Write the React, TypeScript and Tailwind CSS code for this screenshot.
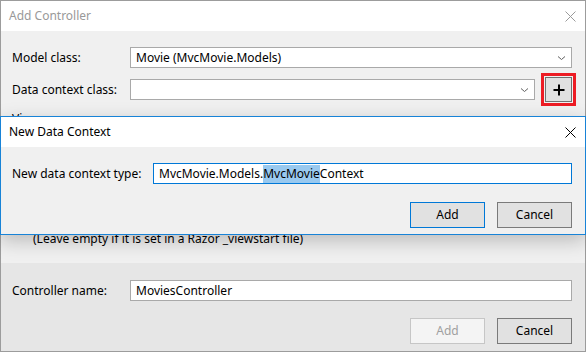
import React from 'react';

const Chevron: React.FC = () => (
  <svg width="9" height="6" viewBox="0 0 9 6" className="shrink-0">
    <path d="M1 1.5 L4.5 4.5 L8 1.5" fill="none" stroke="#606060" strokeWidth="1" />
  </svg>
);

const CloseX: React.FC<{ color: string }> = ({ color }) => (
  <svg width="11" height="11" viewBox="0 0 11 11">
    <path d="M0.5 0.5 L10.5 10.5 M10.5 0.5 L0.5 10.5" stroke={color} strokeWidth="1" />
  </svg>
);

const Combo: React.FC<{ value?: string; className?: string }> = ({ value, className }) => (
  <div className={`h-[21px] bg-white border border-[#a9a9a9] flex items-center justify-between pl-[5px] pr-[5px] ${className ?? ''}`}>
    <span>{value}</span>
    <Chevron />
  </div>
);

const Button: React.FC<{ label: string; variant?: 'default' | 'normal' | 'disabled' }> = ({ label, variant = 'normal' }) => {
  const styles = {
    default: 'bg-[#e1e1e1] border-[#0078d7] text-black',
    normal: 'bg-[#e1e1e1] border-[#7a7a7a] text-black',
    disabled: 'bg-[#f4f4f4] border-[#c6c6c6] text-[#a0a0a0]',
  };
  return (
    <div className={`w-[75px] h-[26px] border flex items-center justify-center ${styles[variant]}`}>{label}</div>
  );
};

// checkbox rows of the Views group; they sit under the dialog, so only the box is drawn
const CheckRow: React.FC = () => (
  <div className="h-[20px] flex items-center">
    <div className="size-[13px] border border-[#333] bg-white"></div>
  </div>
);

export default function App() {
  return (
    <div
      className="relative w-[586px] h-[352px] overflow-hidden text-[12px] text-black"
      style={{ fontFamily: '"Noto Sans", "Open Sans", sans-serif' }}
    >
      {/* Add Controller window */}
      <div className="w-full h-full flex flex-col border border-[#9c9c9c]">
        <div className="h-[30px] bg-white flex items-center justify-between pl-[8px] pr-[9px] text-[#999]">
          <span>Add Controller</span>
          <CloseX color="#9a9a9a" />
        </div>

        <div className="flex-1 flex flex-col bg-[#f0f0f0] pl-[11px] pr-[13px] pt-[16px]">
          <div className="flex items-center h-[21px]">
            <span className="w-[118px]">Model class:</span>
            <Combo value="Movie (MvcMovie.Models)" className="flex-1" />
          </div>
          <div className="flex items-center h-[25px] mt-[9px]">
            <span className="w-[118px]">Data context class:</span>
            <Combo className="flex-1" />
            <div className="ml-[10px] w-[27px] h-[25px] bg-[#e1e1e1] border border-[#707070] flex items-center justify-center outline-[3px] outline-solid outline-offset-[1px] outline-[#ed1c24]">
              <svg width="12" height="12" viewBox="0 0 12 12">
                <path d="M6 0.5 V11.5 M0.5 6 H11.5" stroke="#000" strokeWidth="2" />
              </svg>
            </div>
          </div>

          <div className="mt-[9px] leading-[16px]">Views:</div>
          <div className="flex flex-col gap-[4px] mt-[3px] pl-[21px]">
            <CheckRow />
            <CheckRow />
            <CheckRow />
          </div>
          <div className="mt-[6px] ml-[21px] h-[21px] bg-white border border-[#a9a9a9]"></div>
          <div className="mt-[6px] pl-[21px] leading-[16px]">(Leave empty if it is set in a Razor _viewstart file)</div>
        </div>

        <div className="h-[88px] bg-[#e6e6e6] pl-[11px] pr-[13px] pt-[17px] flex flex-col">
          <div className="flex items-center h-[21px]">
            <span className="w-[118px]">Controller name:</span>
            <div className="flex-1 h-[21px] bg-white border border-[#a9a9a9] flex items-center pl-[5px]">MoviesController</div>
          </div>
          <div className="flex justify-end gap-[12px] mt-[17px]">
            <Button label="Add" variant="disabled" />
            <Button label="Cancel" />
          </div>
        </div>
      </div>

      {/* New Data Context dialog over it */}
      <div className="absolute left-0 top-[116px] w-[586px] h-[119px] border border-[#1883d7] flex flex-col shadow-[0_6px_18px_rgba(0,0,0,0.22)]">
        <div className="h-[30px] bg-white flex items-center justify-between pl-[8px] pr-[9px]">
          <span>New Data Context</span>
          <CloseX color="#000" />
        </div>
        <div className="flex-1 bg-[#f0f0f0] pl-[11px] pr-[13px] pt-[16px] flex flex-col">
          <div className="flex items-center h-[21px]">
            <span className="w-[141px]">New data context type:</span>
            <div className="flex-1 h-[21px] bg-white border border-[#0078d7] flex items-center pl-[5px]">
              MvcMovie.Models.<span className="bg-[#99c9ef]">MvcMovie</span>Context
            </div>
          </div>
          <div className="flex justify-end gap-[12px] mt-[18px]">
            <Button label="Add" variant="default" />
            <Button label="Cancel" />
          </div>
        </div>
      </div>
    </div>
  );
}
